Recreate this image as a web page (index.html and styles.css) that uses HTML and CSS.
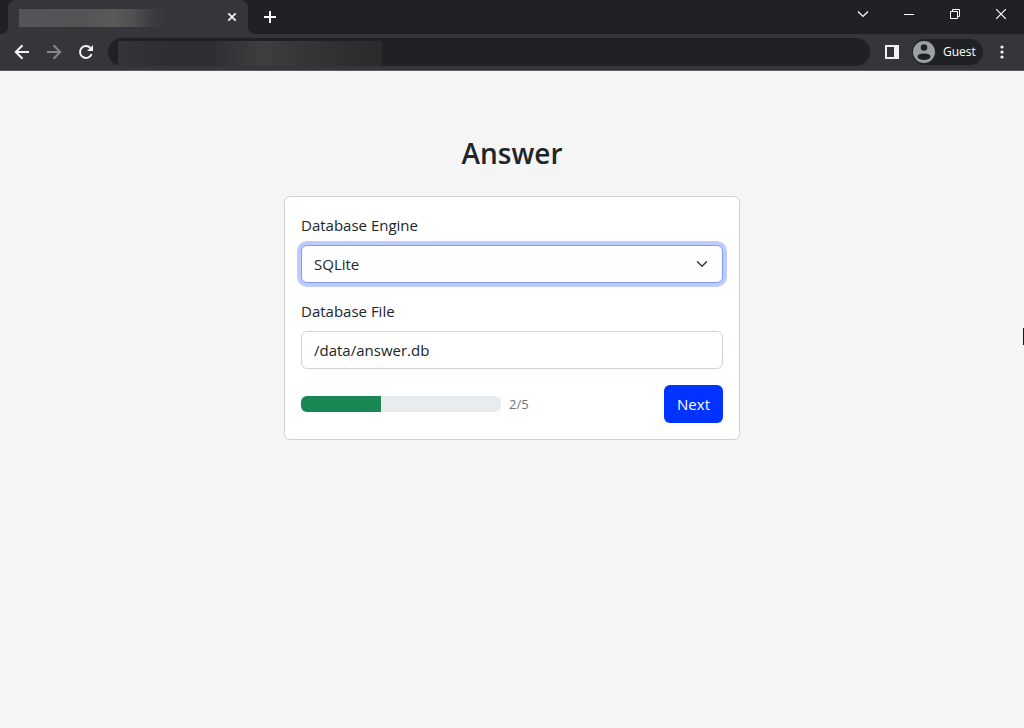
FILE: index.html
```html
<!DOCTYPE html>
<html lang="en">
<head>
<meta charset="utf-8">
<meta name="viewport" content="width=device-width, initial-scale=1">
<title>Answer</title>
<link rel="stylesheet" href="styles.css">
</head>
<body>
<header class="browser">
  <div class="tabstrip">
    <div class="tab">
      <span class="tab-title"></span>
      <button class="icon-btn tab-close" type="button" aria-label="Close tab">
        <svg width="16" height="16" viewBox="0 0 16 16" fill="none" stroke="#f1f3f4" stroke-width="1.8"><path d="M4.3 4.3l7.4 7.4M11.700 4.300l-7.400 7.400"/></svg>
      </button>
    </div>
    <button class="icon-btn new-tab" type="button" aria-label="New tab">
      <svg width="16" height="16" viewBox="0 0 16 16" fill="none" stroke="#fff" stroke-width="2"><path d="M8 2v12M2 8h12"/></svg>
    </button>
    <div class="window-controls">
      <button class="icon-btn win-btn" type="button" aria-label="Search tabs">
        <svg width="12" height="12" viewBox="0 0 12 12" fill="none" stroke="#fff" stroke-width="1.2"><path d="M1 3.500l5 5 5-5"/></svg>
      </button>
      <button class="icon-btn win-btn" type="button" aria-label="Minimize">
        <svg width="10" height="10" viewBox="0 0 10 10" fill="none" stroke="#fff"><path d="M0 5.500h10"/></svg>
      </button>
      <button class="icon-btn win-btn" type="button" aria-label="Restore">
        <svg width="10" height="10" viewBox="0 0 10 10" fill="none" stroke="#fff"><path d="M.5 2.500h7v7h-7zM2.500 2.500v-2h7v7h-2"/></svg>
      </button>
      <button class="icon-btn win-btn" type="button" aria-label="Close">
        <svg width="10" height="10" viewBox="0 0 10 10" fill="none" stroke="#fff" stroke-width="1.2"><path d="M0 0l10 10M10 0L0 10"/></svg>
      </button>
    </div>
  </div>
  <div class="toolbar">
    <button class="icon-btn nav-btn" type="button" aria-label="Back">
      <svg width="20" height="20" viewBox="0 0 20 20" fill="none" stroke="#f1f3f4" stroke-width="2"><path d="M17 10H4M10.500 3.300L3.800 10l6.700 6.700"/></svg>
    </button>
    <button class="icon-btn nav-btn" type="button" aria-label="Forward" disabled>
      <svg width="20" height="20" viewBox="0 0 20 20" fill="none" stroke="#84868a" stroke-width="2"><path d="M3 10h13M9.500 3.300L16.200 10l-6.700 6.700"/></svg>
    </button>
    <button class="icon-btn nav-btn" type="button" aria-label="Reload">
      <svg width="20" height="20" viewBox="0 0 20 20"><path d="M15.600 12.200A6 6 0 1 1 14.300 5.800" fill="none" stroke="#f1f3f4" stroke-width="2"/><path d="M17 3v6h-6z" fill="#f1f3f4"/></svg>
    </button>
    <div class="address"><span class="address-text"></span></div>
    <button class="icon-btn side-panel" type="button" aria-label="Side panel">
      <svg width="14" height="14" viewBox="0 0 14 14"><path fill="#f1f3f4" fill-rule="evenodd" d="M0 0h14v14H0zM2 2v10h7V2z"/></svg>
    </button>
    <button class="profile" type="button">
      <svg width="22" height="22" viewBox="0 0 22 22"><circle cx="11" cy="11" r="11" fill="#9aa0a6"/><circle cx="11" cy="6.500" r="3.300" fill="#202124"/><ellipse cx="11" cy="15.700" rx="6.500" ry="3.300" fill="#202124"/></svg>
      <span>Guest</span>
    </button>
    <button class="icon-btn menu-btn" type="button" aria-label="Menu">
      <svg width="4" height="14" viewBox="0 0 4 14" fill="#f1f3f4"><circle cx="2" cy="2" r="1.600"/><circle cx="2" cy="7" r="1.600"/><circle cx="2" cy="12" r="1.600"/></svg>
    </button>
  </div>
</header>
<main class="page">
  <h1 class="title">Answer</h1>
  <form class="card">
    <div class="field">
      <label for="engine">Database Engine</label>
      <div class="select-wrap">
        <select id="engine" class="control control-focus"><option>SQLite</option></select>
        <svg class="chevron" width="12" height="12" viewBox="0 0 16 16" fill="none" stroke="#343a40" stroke-width="2" stroke-linecap="round" stroke-linejoin="round"><path d="M2 5l6 6 6-6"/></svg>
      </div>
    </div>
    <div class="field">
      <label for="file">Database File</label>
      <input id="file" class="control" type="text" value="/data/answer.db">
    </div>
    <div class="footer">
      <div class="progress" role="progressbar" aria-label="Step" aria-valuenow="2" aria-valuemin="0" aria-valuemax="5"><div class="bar" style="width:40%"></div></div>
      <span class="step">2/5</span>
      <button class="next" type="button">Next</button>
    </div>
  </form>
  <span class="pointer"></span>
</main>
</body>
</html>
```
FILE: styles.css
```css
* { box-sizing: border-box; }
body {
  margin: 0;
  min-height: 100vh;
  background: #f5f5f5;
  color: #212529;
  font: 15px/24px "Segoe UI", "Open Sans", sans-serif;
}
button { font: inherit; border: 0; margin: 0; cursor: pointer; }
svg { display: block; flex: none; }

.browser { background: #35363a; border-bottom: 1px solid #5b5b60; }
.tabstrip { display: flex; height: 34px; background: #202124; padding-left: 8px; }
.tab {
  position: relative;
  width: 240px;
  display: flex;
  align-items: center;
  justify-content: space-between;
  padding: 0 8px 0 11px;
  background: #35363a;
  border-radius: 8px 8px 0 0;
}
.tab::before, .tab::after {
  content: "";
  position: absolute;
  bottom: 0;
  width: 8px;
  height: 8px;
}
.tab::before { left: -8px; background: radial-gradient(circle at 0 0, #202124 8px, #35363a 8px); }
.tab::after { right: -8px; background: radial-gradient(circle at 100% 0, #202124 8px, #35363a 8px); }
.tab-title {
  width: 148px;
  height: 18px;
  margin-top: 2px;
  background: linear-gradient(90deg, #54555a, #545456 45%, #5a5b58 64%, #505150 76%, #3c3d40 90%, #35363a);
}
.icon-btn {
  display: flex;
  align-items: center;
  justify-content: center;
  padding: 0;
  background: transparent;
}
.new-tab { width: 28px; margin-left: 8px; }
.window-controls { display: flex; margin-left: auto; }
.win-btn { width: 46px; height: 28px; }

.toolbar { display: flex; align-items: center; height: 36px; padding: 0 8px 0 6px; }
.nav-btn { width: 32px; height: 32px; }
.address {
  flex: 1;
  height: 28px;
  margin-left: 6px;
  padding: 3px 0 0 10px;
  background: #202124;
  border-radius: 14px;
}
.address-text {
  display: block;
  width: 264px;
  height: 25px;
  background: linear-gradient(90deg, #333438, #2d2f32 18%, #2d2e31 35%, #3d3e40 55%, #333436 73%, #292a2b);
}
.side-panel { width: 28px; height: 28px; margin: 0 6px 0 8px; }
.profile {
  display: flex;
  align-items: center;
  gap: 8px;
  width: 71px;
  height: 26px;
  padding: 0 8px 0 1px;
  color: #fff;
  background: #202124;
  border-radius: 13px;
  font-size: 12px;
  line-height: 16px;
}
.menu-btn { width: 28px; height: 28px; margin-left: 5px; }

.page { padding: 65px 12px 24px; }
.title {
  margin: 0 0 25px;
  font-size: 28px;
  line-height: 35px;
  font-weight: 600;
  text-align: center;
}
.card {
  max-width: 456px;
  margin: 0 auto;
  padding: 16px;
  background: #fff;
  border: 1px solid #d0d1d3;
  border-radius: 6px;
}
.field { margin-bottom: 16px; }
.field label { display: block; margin-bottom: 8px; }
.control {
  display: block;
  width: 100%;
  height: 38px;
  padding: 6px 12px;
  font: inherit;
  color: inherit;
  background: #fff;
  border: 1px solid #ced4da;
  border-radius: 6px;
  appearance: none;
  outline: 0;
}
.control-focus { border-color: #8099ff; box-shadow: 0 0 0 4px #bfccff; }
.select-wrap { display: grid; align-items: center; }
.select-wrap > * { grid-area: 1 / 1; }
.chevron { justify-self: end; margin-right: 15px; pointer-events: none; }
.footer { display: flex; align-items: center; gap: 8px; }
.progress { width: 200px; height: 16px; background: #e9ecef; border-radius: 6px; overflow: hidden; }
.bar { height: 100%; background: #198754; }
.step { color: #6c757d; font-size: 13px; }
.next {
  margin-left: auto;
  height: 38px;
  padding: 0 13px;
  color: #fff;
  background: #0033ff;
  border-radius: 6px;
}
.pointer { position: absolute; right: 0; top: 328px; width: 1px; height: 17px; background: #15151c; }
```
